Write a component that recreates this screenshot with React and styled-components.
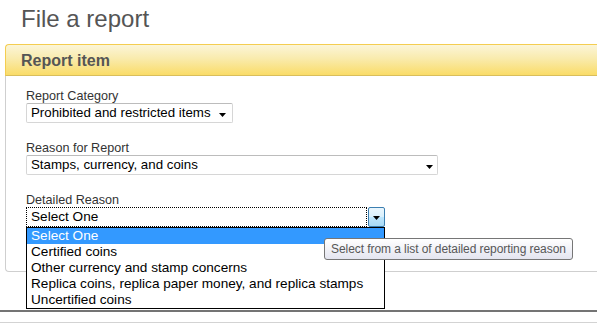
import styled, { createGlobalStyle } from "styled-components"

const Global = createGlobalStyle`
  html, body {
    margin: 0;
    padding: 0;
    background: #fff;
    overflow: hidden;
  }
  body {
    font-family: "Liberation Sans", Arial, sans-serif;
  }
`

const Page = styled.div`
  width: 597px;
  height: 330px;
  overflow: hidden;
`

const Title = styled.h1`
  margin: 0 0 11px;
  padding: 5px 0 0 21px;
  font-size: 24px;
  font-weight: normal;
  line-height: 28px;
  color: #555;
`

const Panel = styled.section`
  margin: 0 -40px 0 5px;
`

const PanelHead = styled.div`
  height: 28px;
  padding: 2px 0 0 15px;
  border: 1px solid #f4cd50;
  border-bottom-color: #d9be5c;
  border-right: none;
  border-radius: 4px 0 0 0;
  background: linear-gradient(#fbf5d8, #f9ebad 45%, #fadc68);
  font-size: 16px;
  font-weight: bold;
  line-height: 28px;
  color: #555;
`

const PanelBody = styled.div`
  display: flex;
  flex-direction: column;
  gap: 18px;
  padding: 13px 0 44px 20px;
  border-left: 1px solid #cfcfcf;
  border-bottom: 1px solid #cfcfcf;
  border-bottom-left-radius: 4px;
`

const Field = styled.div`
  display: flex;
  flex-direction: column;
`

const Label = styled.label`
  font-size: 12.6px;
  line-height: 14px;
  color: #333;
`

const Select = styled.div`
  box-sizing: border-box;
  width: ${(p) => p.$width}px;
  height: 20px;
  display: flex;
  align-items: center;
  justify-content: space-between;
  padding: 0 ${(p) => p.$arrowGap}px 0 4px;
  border: 1px solid #d6d6d6;
  border-top-color: #bcbcbc;
  border-radius: 2px;
  font-size: 13.3px;
  line-height: 18px;
  color: #000;
  white-space: nowrap;
`

const Arrow = styled.svg`
  width: 7px;
  height: 4px;
  margin-top: ${(p) => p.$drop || 4}px;
  flex: none;
`

const Combo = styled.div`
  position: relative;
  z-index: 2;
  box-sizing: border-box;
  width: 359px;
  height: 20px;
  display: flex;
  gap: 1px;
`

const ComboText = styled.div`
  flex: 1;
  box-sizing: border-box;
  padding-left: 4px;
  border: 1px dotted #000;
  font-size: 13.6px;
  line-height: 18px;
  color: #000;
`

const ComboButton = styled.div`
  box-sizing: border-box;
  width: 17px;
  display: flex;
  align-items: center;
  justify-content: center;
  border: 1px solid #3c7fb1;
  border-radius: 2px;
  background: linear-gradient(#eaf6fd, #d9f0fc 50%, #bee6fd 50%, #a7d9f5);
`

const List = styled.ul`
  position: absolute;
  top: 20px;
  left: 0;
  width: 359px;
  box-sizing: border-box;
  margin: 0;
  padding: 0;
  list-style: none;
  background: #fff;
  border: 1px solid #000;
`

const Option = styled.li`
  height: 16px;
  padding-left: 4px;
  font-size: 13.6px;
  line-height: 16px;
  white-space: nowrap;
  color: ${(p) => (p.$active ? "#fff" : "#000")};
  background: ${(p) => (p.$active ? "#3399ff" : "transparent")};
`

const Tooltip = styled.div`
  position: absolute;
  left: 298px;
  top: 31px;
  box-sizing: border-box;
  height: 22px;
  padding: 0 6px;
  border: 1px solid #767676;
  border-radius: 3px;
  background: linear-gradient(#ffffff, #e4e5f0);
  font-size: 12px;
  letter-spacing: -0.07px;
  line-height: 20px;
  color: #575757;
  white-space: nowrap;
`

const Footer = styled.div`
  margin-top: 38px;
  padding-top: 10px;
  border-top: 2px solid #747474;
`

const FooterRule = styled.div`
  border-top: 1px solid #d3d3d3;
`

const DownArrow = ({ drop }) => (
  <Arrow viewBox="0 0 7 4" $drop={drop}>
    <polygon points="0,0 7,0 3.5,4" fill="#000" />
  </Arrow>
)

const details = [
  "Select One",
  "Certified coins",
  "Other currency and stamp concerns",
  "Replica coins, replica paper money, and replica stamps",
  "Uncertified coins",
]

export default function App() {
  return (
    <Page>
      <Global />
      <Title>File a report</Title>
      <Panel>
        <PanelHead>Report item</PanelHead>
        <PanelBody>
          <Field>
            <Label>Report Category</Label>
            <Select $width={207} $arrowGap={6}>
              Prohibited and restricted items
              <DownArrow />
            </Select>
          </Field>
          <Field>
            <Label>Reason for Report</Label>
            <Select $width={412} $arrowGap={4}>
              Stamps, currency, and coins
              <DownArrow />
            </Select>
          </Field>
          <Field>
            <Label>Detailed Reason</Label>
            <Combo>
              <ComboText>Select One</ComboText>
              <ComboButton>
                <DownArrow drop={2} />
              </ComboButton>
              <List>
                {details.map((d, i) => (
                  <Option key={d} $active={i === 0}>
                    {d}
                  </Option>
                ))}
              </List>
              <Tooltip>Select from a list of detailed reporting reason</Tooltip>
            </Combo>
          </Field>
        </PanelBody>
      </Panel>
      <Footer>
        <FooterRule />
      </Footer>
    </Page>
  )
}
